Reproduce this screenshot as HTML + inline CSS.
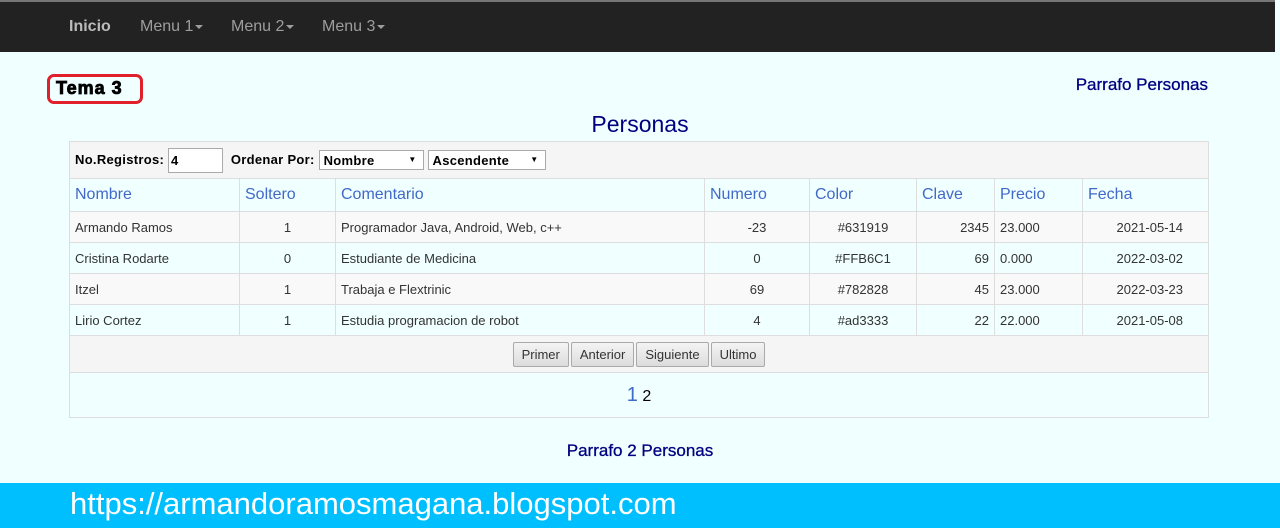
<!DOCTYPE html>
<html><head><meta charset="utf-8"><style>
*{box-sizing:border-box;margin:0;padding:0}
body{width:1280px;height:528px;overflow:hidden;background:#f0ffff;font-family:"Liberation Sans",sans-serif;position:relative}
.nav{position:absolute;left:0;top:0;width:1275px;height:52px;background:#222;border-top:2px solid #777}
.nav span{position:absolute;top:16px;font-size:16px;color:#9d9d9d}
.car{display:inline-block;border-left:4px solid transparent;border-right:4px solid transparent;border-top:4px solid #9d9d9d;vertical-align:middle;margin-left:2px}
.tema{position:absolute;left:47px;top:74px;width:96px;height:30px;border:3px solid #e0202a;border-radius:7px;font-weight:bold;font-size:18px;padding:1px 0 0 6px;letter-spacing:1px;color:#000;-webkit-text-stroke:0.8px #000}
.pp{position:absolute;right:72px;top:75px;color:#000080;font-size:17px;-webkit-text-stroke:0.3px #000080}
h2{position:absolute;left:0;width:1280px;text-align:center;top:111px;font-weight:normal;font-size:23px;color:#000080}
table{position:absolute;left:69px;top:141px;width:1140px;border-collapse:collapse;font-size:13px;color:#333}
td,th{border:1px solid #ddd;padding:0 5px}
th{height:33px;text-align:left;font-weight:normal;color:#4169c8;font-size:16px}
tr.r td{height:31px}
tr.o td{background:#f9f9f9}
.c{text-align:center}.rt{text-align:right}
.fe{text-align:right;padding-right:25px}
.tool td{height:37px;background:#f5f5f5;font-weight:bold;font-size:13px;color:#000;letter-spacing:0.3px}
.inp{display:inline-block;width:55px;height:25px;border:1px solid #aaa;background:#fff;vertical-align:middle;padding:4px 2px}
.sel{display:inline-block;height:20px;border:1px solid #aaa;background:#fff;vertical-align:middle;padding:2px 4px;position:relative}
.sel:after{content:"▼";position:absolute;right:6px;top:4px;font-size:8px}
.btn td{height:37px;background:#f5f5f5;text-align:center}
button{font-family:"Liberation Sans",sans-serif;font-size:13px;color:#333;padding:4px 8px;border:1px solid #aaa;border-radius:2px;background:linear-gradient(#f4f4f4,#dcdcdc);margin:0 1px}
.pg td{height:45px;text-align:center;font-size:16px}
.p2{position:absolute;left:0;width:1280px;text-align:center;top:441px;color:#000080;font-size:17px;-webkit-text-stroke:0.3px #000080}
.foot{position:absolute;left:0;top:483px;width:1280px;height:45px;background:#00bfff;color:#fff;font-size:31px;padding:3px 0 0 70px}
</style></head><body>
<div class="nav">
<span style="left:69px;font-weight:bold;color:#bbb">Inicio</span>
<span style="left:140px">Menu 1<i class="car"></i></span>
<span style="left:231px">Menu 2<i class="car"></i></span>
<span style="left:322px">Menu 3<i class="car"></i></span>
</div>
<div class="tema">Tema 3</div>
<div class="pp">Parrafo Personas</div>
<h2>Personas</h2>
<table>
<tr class="tool"><td colspan="8">No.Registros: <span class="inp">4</span> &nbsp;Ordenar Por: <span class="sel" style="width:105px">Nombre</span> <span class="sel" style="width:118px">Ascendente</span></td></tr>
<tr><th style="width:170px">Nombre</th><th style="width:96px">Soltero</th><th style="width:369px">Comentario</th><th style="width:105px">Numero</th><th style="width:107px">Color</th><th style="width:78px">Clave</th><th style="width:88px">Precio</th><th>Fecha</th></tr>
<tr class="r o"><td>Armando Ramos</td><td class="c">1</td><td>Programador Java, Android, Web, c++</td><td class="c">-23</td><td class="c">#631919</td><td class="rt">2345</td><td>23.000</td><td class="fe">2021-05-14</td></tr>
<tr class="r"><td>Cristina Rodarte</td><td class="c">0</td><td>Estudiante de Medicina</td><td class="c">0</td><td class="c">#FFB6C1</td><td class="rt">69</td><td>0.000</td><td class="fe">2022-03-02</td></tr>
<tr class="r o"><td>Itzel</td><td class="c">1</td><td>Trabaja e Flextrinic</td><td class="c">69</td><td class="c">#782828</td><td class="rt">45</td><td>23.000</td><td class="fe">2022-03-23</td></tr>
<tr class="r"><td>Lirio Cortez</td><td class="c">1</td><td>Estudia programacion de robot</td><td class="c">4</td><td class="c">#ad3333</td><td class="rt">22</td><td>22.000</td><td class="fe">2021-05-08</td></tr>
<tr class="btn"><td colspan="8"><button>Primer</button><button>Anterior</button><button>Siguiente</button><button>Ultimo</button></td></tr>
<tr class="pg"><td colspan="8"><span style="color:#4169c8;font-size:20px">1</span> <span style="color:#000">2</span></td></tr>
</table>
<div class="p2">Parrafo 2 Personas</div>
<div class="foot">https://armandoramosmagana.blogspot.com</div>
</body></html>
